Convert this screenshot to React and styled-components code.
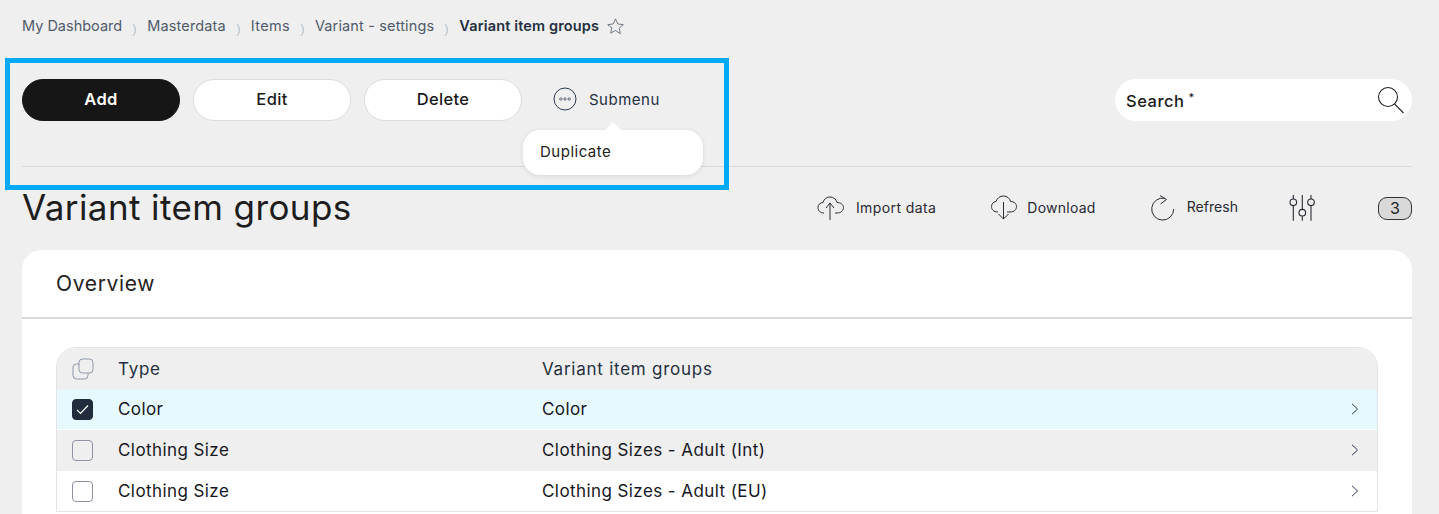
import React from "react";
import styled, { createGlobalStyle } from "styled-components";

const Global = createGlobalStyle`
  html, body { margin: 0; padding: 0; background: #efefef; }
  body { font-family: Inter, "Noto Sans", sans-serif; color: #1a1a1a; overflow: hidden; }
  * { box-sizing: border-box; }
`;

const Page = styled.div`
  position: relative;
  width: 1439px;
  height: 514px;
  padding: 0 27px 0 22px;
  overflow: hidden;
`;

const Crumbs = styled.nav`
  display: flex;
  align-items: center;
  height: 52px;
  padding-bottom: 2px;
  font-size: 14.5px;
  color: #4f5b6b;
`;
const CrumbLink = styled.span`
  white-space: nowrap;
  letter-spacing: ${p => p.$ls}px;
`;
const CrumbCurrent = styled.span`
  font-weight: 600;
  color: #243041;
  white-space: nowrap;
  letter-spacing: 0.15px;
`;
const CrumbSepIcon = styled.svg`
  width: 6px;
  height: 14px;
  margin: 10px 9px 0 10px;
  flex: none;
`;
const StarIcon = styled.svg`
  width: 19px;
  height: 19px;
  margin: 2px 0 0 7px;
  flex: none;
`;

const Toolbar = styled.div`
  display: flex;
  align-items: flex-start;
  padding-top: 27px;
  height: 115px;
  border-bottom: 1px solid #d9d9d9;
`;
const Button = styled.button`
  width: 158px;
  height: 42px;
  margin-right: 13px;
  border-radius: 21px;
  border: 1px solid ${p => (p.$primary ? "#161616" : "#dcdcdc")};
  background: ${p => (p.$primary ? "#161616" : "#fff")};
  color: ${p => (p.$primary ? "#fff" : "#1a1a1a")};
  font: ${p => (p.$primary ? 600 : 500)} 16.5px Inter, sans-serif;
  letter-spacing: 0.35px;
  padding: 0 0 2px;
`;
const SubmenuToggle = styled.div`
  display: flex;
  align-items: center;
  height: 42px;
  margin-left: 18px;
  gap: 12px;
  padding-bottom: 2px;
  font-size: 15px;
  letter-spacing: 0.5px;
  color: #243041;
`;
const SubmenuIcon = styled.svg`
  width: 24px;
  height: 24px;
  flex: none;
`;
const SearchBox = styled.div`
  margin-left: auto;
  width: 297px;
  height: 42px;
  border-radius: 21px;
  background: #fff;
  display: flex;
  align-items: center;
  justify-content: space-between;
  padding: 0 6px 0 11px;
  font-size: 16.5px;
  font-weight: 500;
  letter-spacing: 0.5px;
  color: #1a1a1a;
`;
const SearchLabel = styled.span`
  position: relative;
  top: 1px;
`;
const Req = styled.sup`
  font-size: 11px;
  margin-left: 4px;
  line-height: 0;
`;
const SearchIcon = styled.svg`
  width: 30px;
  height: 30px;
  flex: none;
`;

const Popup = styled.div`
  position: absolute;
  left: 523px;
  top: 130px;
  width: 180px;
  height: 45px;
  border-radius: 17px;
  background: #fff;
  box-shadow: 0 1px 5px rgba(0, 0, 0, 0.1);
  display: flex;
  align-items: center;
  padding: 0 0 2px 17px;
  font-size: 15px;
  letter-spacing: 0.5px;
  color: #222;
  z-index: 2;
  &::before {
    content: "";
    position: absolute;
    left: 81px;
    top: -8px;
    border-left: 9px solid transparent;
    border-right: 9px solid transparent;
    border-bottom: 9px solid #fff;
  }
`;
const Highlight = styled.div`
  position: absolute;
  left: 5px;
  top: 58px;
  width: 724px;
  height: 132px;
  border: 5px solid #00aaf6;
  pointer-events: none;
  z-index: 3;
`;

const TitleRow = styled.div`
  display: flex;
  align-items: center;
  height: 83px;
  padding-bottom: 3px;
`;
const Title = styled.h1`
  margin: 0;
  font-size: 35px;
  font-weight: 400;
  letter-spacing: 0.4px;
  color: #1d1d1d;
  flex: 1;
`;
const Action = styled.div`
  display: flex;
  align-items: center;
  gap: ${p => p.$gap}px;
  margin-right: ${p => p.$mr}px;
  font-size: 14px;
  letter-spacing: ${p => p.$ls}px;
  color: #2a2a35;
  white-space: nowrap;
`;
const ActionLabel = styled.span`
  position: relative;
  top: ${p => p.$up || 0}px;
`;
const ActionIcon = styled.svg`
  width: 28px;
  height: 28px;
  flex: none;
`;
const Count = styled.div`
  width: 34px;
  height: 23px;
  margin-top: 2px;
  border: 1px solid #333;
  border-radius: 9px;
  background: #d9d9d9;
  display: flex;
  align-items: center;
  justify-content: center;
  font-size: 16px;
  color: #222;
`;

const Card = styled.section`
  background: #fff;
  border-radius: 20px 20px 0 0;
  height: 264px;
`;
const CardHead = styled.div`
  height: 69px;
  border-bottom: 2px solid #d9d9d9;
  display: flex;
  align-items: center;
  padding-left: 34px;
  font-size: 21px;
  letter-spacing: 0.65px;
  color: #222;
`;
const Table = styled.div`
  margin: 28px 34px 0;
  border: 1px solid #e3e3e3;
  border-radius: 20px 20px 0 0;
  overflow: hidden;
`;
const Row = styled.div`
  display: grid;
  grid-template-columns: 61px 424px 1fr 26px;
  align-items: center;
  height: ${p => p.$h}px;
  padding-bottom: ${p => p.$pb || 0}px;
  background: ${p => p.$bg};
  border-bottom: ${p => (p.$sep ? "1px solid #fff" : "none")};
  font-size: 17px;
  letter-spacing: ${p => (p.$head ? 0.75 : 0.42)}px;
  color: ${p => (p.$head ? "#243041" : "#17171f")};
  font-weight: 400;
`;
const Cell = styled.div`
  white-space: nowrap;
`;
const CheckCell = styled.div`
  display: flex;
  padding-left: 15px;
`;
const Box = styled.div`
  width: 21px;
  height: 21px;
  border-radius: 4px;
  border: 1px solid ${p => (p.$on ? "#212c3d" : "#8f92a4")};
  background: ${p => (p.$on ? "#212c3d" : "transparent")};
  display: flex;
  align-items: center;
  justify-content: center;
`;
const CopyIcon = styled.svg`
  width: 22px;
  height: 22px;
`;
const Chevron = styled.svg`
  width: 8px;
  height: 12px;
`;

const Sep = () => (
  <CrumbSepIcon viewBox="0 0 6 14" fill="none">
    <path d="M1 1 C4 4 4 10 1 13" stroke="#a9b3c0" strokeWidth="1" />
  </CrumbSepIcon>
);

const ChevronRight = () => (
  <Chevron viewBox="0 0 8 12" fill="none">
    <path d="M1 .8 6.500 6 1 11.200" stroke="#2b3a55" strokeWidth="1" />
  </Chevron>
);

const rows = [
  { a: "Color", b: "Color", bg: "#e6f9fe", on: true, h: 41, sep: true },
  { a: "Clothing Size", b: "Clothing Sizes - Adult (Int)", bg: "#efefef", h: 41, pb: 1 },
  { a: "Clothing Size", b: "Clothing Sizes - Adult (EU)", bg: "#fff", h: 40 },
];

const ink = "#2a2a35";

export default function App() {
  return (
    <>
      <Global />
      <Page>
        <Crumbs>
          <CrumbLink $ls={0}>My Dashboard</CrumbLink>
          <Sep />
          <CrumbLink $ls={0.15}>Masterdata</CrumbLink>
          <Sep />
          <CrumbLink $ls={0.3}>Items</CrumbLink>
          <Sep />
          <CrumbLink $ls={0.15}>Variant - settings</CrumbLink>
          <Sep />
          <CrumbCurrent>Variant item groups</CrumbCurrent>
          <StarIcon viewBox="0 0 24 24" fill="none">
            <path d="M12 2.500l2.900 6.300 6.900.8-5.100 4.700 1.400 6.800L12 17l-6.100 3.400 1.400-6.800L2.200 9.600l6.900-.8z" stroke="#4f5b6b" strokeWidth="1" strokeLinejoin="round" />
          </StarIcon>
        </Crumbs>

        <Toolbar>
          <Button $primary>Add</Button>
          <Button>Edit</Button>
          <Button>Delete</Button>
          <SubmenuToggle>
            <SubmenuIcon viewBox="0 0 24 24" fill="none">
              <circle cx="12" cy="12" r="11" stroke="#2d3a50" strokeWidth="1" />
              <circle cx="7.800" cy="12" r="1.200" stroke="#2d3a50" strokeWidth=".7" />
              <circle cx="12" cy="12" r="1.200" stroke="#2d3a50" strokeWidth=".7" />
              <circle cx="16.200" cy="12" r="1.200" stroke="#2d3a50" strokeWidth=".7" />
            </SubmenuIcon>
            Submenu
          </SubmenuToggle>
          <SearchBox>
            <SearchLabel>Search<Req>*</Req></SearchLabel>
            <SearchIcon viewBox="0 0 30 30" fill="none">
              <circle cx="12" cy="12" r="9.500" stroke="#222" strokeWidth="1.100" />
              <path d="M18.500 19l9 9" stroke="#222" strokeWidth="1.100" />
            </SearchIcon>
          </SearchBox>
        </Toolbar>

        <TitleRow>
          <Title>Variant item groups</Title>
          <Action $gap={12} $mr={54} $ls={0.4}>
            <ActionIcon viewBox="0 0 28 28" fill="none">
              <path d="M8 20C4 20 2 17.500 2 14.500C2 11.500 4.500 9.500 7 9.500C8 6 10.500 4 14 4C17.500 4 20.500 6.500 21 9.500C24.500 9.500 27.500 11.500 27.500 14.500C27.500 17.500 25 20 21 20H19" stroke={ink} strokeWidth="1" />
              <path d="M14 27V10M10 15l4-5 4 5" stroke={ink} strokeWidth="1" />
            </ActionIcon>
            Import data
          </Action>
          <Action $gap={9} $mr={52} $ls={0.25}>
            <ActionIcon viewBox="0 0 28 28" fill="none">
              <path d="M8 19C3.500 19 1.500 16.500 1.500 13.500C1.500 10.500 4 8.500 6 8.500C7 5 10 3 13.500 3C17 3 20 5.500 20.500 8.500C24 8.500 26.500 10.500 26.500 13.500C26.500 16.500 24.500 19 20 19H17" stroke={ink} strokeWidth="1" />
              <path d="M13.500 9v17M8.500 21l5 5 5-5" stroke={ink} strokeWidth="1" />
            </ActionIcon>
            Download
          </Action>
          <Action $gap={11} $mr={50} $ls={0.05}>
            <ActionIcon viewBox="0 0 28 28" fill="none">
              <path d="M17 5.300A11 11 0 1 0 25.700 16" stroke={ink} strokeWidth="1" />
              <path d="M12 2.500l6.500 4-6 4.500" stroke={ink} strokeWidth="1" />
            </ActionIcon>
            <ActionLabel $up={-1}>Refresh</ActionLabel>
          </Action>
          <Action $gap={0} $mr={62} $ls={0}>
            <ActionIcon viewBox="0 0 28 28" fill="none">
              <path d="M5.300 2v4M5.300 12.600V27.700M14.300 2v14.400M14.300 23v4.700M23 2v4M23 12.600V27.700" stroke={ink} strokeWidth="1.100" />
              <circle cx="5.300" cy="9.300" r="3.300" stroke={ink} strokeWidth="1.100" />
              <circle cx="14.300" cy="19.700" r="3.300" stroke={ink} strokeWidth="1.100" />
              <circle cx="23" cy="9.300" r="3.300" stroke={ink} strokeWidth="1.100" />
            </ActionIcon>
          </Action>
          <Count>3</Count>
        </TitleRow>

        <Card>
          <CardHead>Overview</CardHead>
          <Table>
            <Row $head $bg="#efefef" $h={41}>
              <CheckCell>
                <CopyIcon viewBox="0 0 22 22" fill="none">
                  <rect x="7" y="1" width="14" height="14" rx="3.500" stroke="#8f97a8" strokeWidth="1" />
                  <path d="M7 6H4.500A3.500 3.500 0 0 0 1 9.500v8A3.500 3.500 0 0 0 4.500 21h8a3.500 3.500 0 0 0 3.500-3.500V15" stroke="#8f97a8" strokeWidth="1" />
                </CopyIcon>
              </CheckCell>
              <Cell>Type</Cell>
              <Cell>Variant item groups</Cell>
              <Cell />
            </Row>
            {rows.map((r, i) => (
              <Row key={i} $bg={r.bg} $h={r.h} $sep={r.sep} $pb={r.pb}>
                <CheckCell>
                  <Box $on={r.on}>
                    {r.on && (
                      <svg width="13" height="11" viewBox="0 0 13 11" fill="none">
                        <path d="M1 6l3.500 3.500L12 1.500" stroke="#fff" strokeWidth="1.200" />
                      </svg>
                    )}
                  </Box>
                </CheckCell>
                <Cell>{r.a}</Cell>
                <Cell>{r.b}</Cell>
                <Cell><ChevronRight /></Cell>
              </Row>
            ))}
          </Table>
        </Card>

        <Popup>Duplicate</Popup>
        <Highlight />
      </Page>
    </>
  );
}
